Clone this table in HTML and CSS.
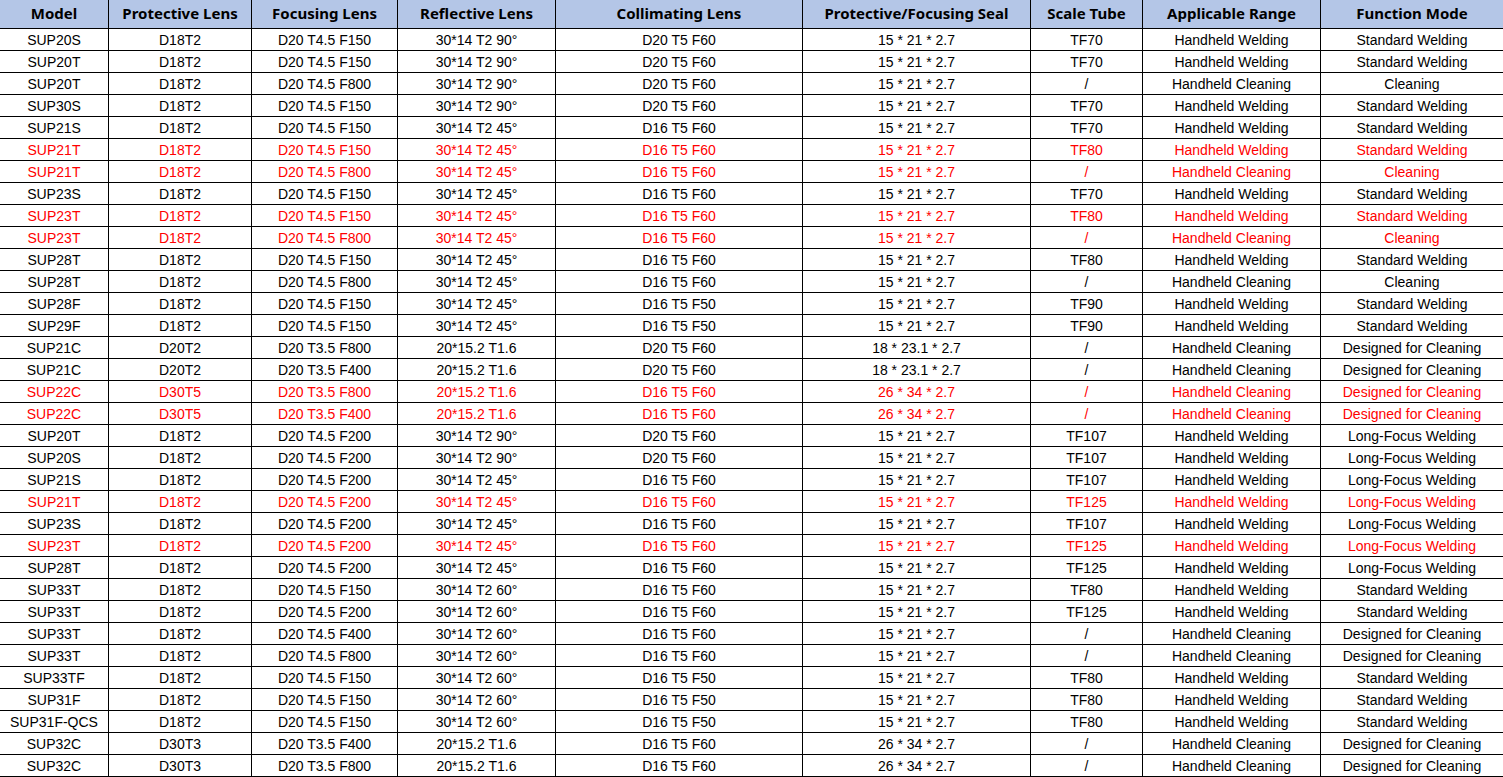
FILE: index.html
```html
<!DOCTYPE html>
<html lang="en">
<head>
<meta charset="utf-8">
<title>Lens Compatibility Table</title>
<link rel="stylesheet" href="styles.css">
</head>
<body>
<div class="wrap">
<table class="spec">
<colgroup>
<col class="c1"><col class="c2"><col class="c3"><col class="c4"><col class="c5"><col class="c6"><col class="c7"><col class="c8"><col class="c9">
</colgroup>
<thead>
<tr><th>Model</th><th>Protective Lens</th><th>Focusing Lens</th><th>Reflective Lens</th><th>Collimating Lens</th><th>Protective/Focusing Seal</th><th>Scale Tube</th><th>Applicable Range</th><th>Function Mode</th></tr>
</thead>
<tbody>
<tr><td>SUP20S</td><td>D18T2</td><td>D20 T4.5 F150</td><td>30*14 T2 90°</td><td>D20 T5 F60</td><td>15 * 21 * 2.7</td><td>TF70</td><td>Handheld Welding</td><td>Standard Welding</td></tr>
<tr><td>SUP20T</td><td>D18T2</td><td>D20 T4.5 F150</td><td>30*14 T2 90°</td><td>D20 T5 F60</td><td>15 * 21 * 2.7</td><td>TF70</td><td>Handheld Welding</td><td>Standard Welding</td></tr>
<tr><td>SUP20T</td><td>D18T2</td><td>D20 T4.5 F800</td><td>30*14 T2 90°</td><td>D20 T5 F60</td><td>15 * 21 * 2.7</td><td>/</td><td>Handheld Cleaning</td><td>Cleaning</td></tr>
<tr><td>SUP30S</td><td>D18T2</td><td>D20 T4.5 F150</td><td>30*14 T2 90°</td><td>D20 T5 F60</td><td>15 * 21 * 2.7</td><td>TF70</td><td>Handheld Welding</td><td>Standard Welding</td></tr>
<tr><td>SUP21S</td><td>D18T2</td><td>D20 T4.5 F150</td><td>30*14 T2 45°</td><td>D16 T5 F60</td><td>15 * 21 * 2.7</td><td>TF70</td><td>Handheld Welding</td><td>Standard Welding</td></tr>
<tr class="hl"><td>SUP21T</td><td>D18T2</td><td>D20 T4.5 F150</td><td>30*14 T2 45°</td><td>D16 T5 F60</td><td>15 * 21 * 2.7</td><td>TF80</td><td>Handheld Welding</td><td>Standard Welding</td></tr>
<tr class="hl"><td>SUP21T</td><td>D18T2</td><td>D20 T4.5 F800</td><td>30*14 T2 45°</td><td>D16 T5 F60</td><td>15 * 21 * 2.7</td><td>/</td><td>Handheld Cleaning</td><td>Cleaning</td></tr>
<tr><td>SUP23S</td><td>D18T2</td><td>D20 T4.5 F150</td><td>30*14 T2 45°</td><td>D16 T5 F60</td><td>15 * 21 * 2.7</td><td>TF70</td><td>Handheld Welding</td><td>Standard Welding</td></tr>
<tr class="hl"><td>SUP23T</td><td>D18T2</td><td>D20 T4.5 F150</td><td>30*14 T2 45°</td><td>D16 T5 F60</td><td>15 * 21 * 2.7</td><td>TF80</td><td>Handheld Welding</td><td>Standard Welding</td></tr>
<tr class="hl"><td>SUP23T</td><td>D18T2</td><td>D20 T4.5 F800</td><td>30*14 T2 45°</td><td>D16 T5 F60</td><td>15 * 21 * 2.7</td><td>/</td><td>Handheld Cleaning</td><td>Cleaning</td></tr>
<tr><td>SUP28T</td><td>D18T2</td><td>D20 T4.5 F150</td><td>30*14 T2 45°</td><td>D16 T5 F60</td><td>15 * 21 * 2.7</td><td>TF80</td><td>Handheld Welding</td><td>Standard Welding</td></tr>
<tr><td>SUP28T</td><td>D18T2</td><td>D20 T4.5 F800</td><td>30*14 T2 45°</td><td>D16 T5 F60</td><td>15 * 21 * 2.7</td><td>/</td><td>Handheld Cleaning</td><td>Cleaning</td></tr>
<tr><td>SUP28F</td><td>D18T2</td><td>D20 T4.5 F150</td><td>30*14 T2 45°</td><td>D16 T5 F50</td><td>15 * 21 * 2.7</td><td>TF90</td><td>Handheld Welding</td><td>Standard Welding</td></tr>
<tr><td>SUP29F</td><td>D18T2</td><td>D20 T4.5 F150</td><td>30*14 T2 45°</td><td>D16 T5 F50</td><td>15 * 21 * 2.7</td><td>TF90</td><td>Handheld Welding</td><td>Standard Welding</td></tr>
<tr><td>SUP21C</td><td>D20T2</td><td>D20 T3.5 F800</td><td>20*15.2 T1.6</td><td>D20 T5 F60</td><td>18 * 23.1 * 2.7</td><td>/</td><td>Handheld Cleaning</td><td>Designed for Cleaning</td></tr>
<tr><td>SUP21C</td><td>D20T2</td><td>D20 T3.5 F400</td><td>20*15.2 T1.6</td><td>D20 T5 F60</td><td>18 * 23.1 * 2.7</td><td>/</td><td>Handheld Cleaning</td><td>Designed for Cleaning</td></tr>
<tr class="hl"><td>SUP22C</td><td>D30T5</td><td>D20 T3.5 F800</td><td>20*15.2 T1.6</td><td>D16 T5 F60</td><td>26 * 34 * 2.7</td><td>/</td><td>Handheld Cleaning</td><td>Designed for Cleaning</td></tr>
<tr class="hl"><td>SUP22C</td><td>D30T5</td><td>D20 T3.5 F400</td><td>20*15.2 T1.6</td><td>D16 T5 F60</td><td>26 * 34 * 2.7</td><td>/</td><td>Handheld Cleaning</td><td>Designed for Cleaning</td></tr>
<tr><td>SUP20T</td><td>D18T2</td><td>D20 T4.5 F200</td><td>30*14 T2 90°</td><td>D20 T5 F60</td><td>15 * 21 * 2.7</td><td>TF107</td><td>Handheld Welding</td><td>Long-Focus Welding</td></tr>
<tr><td>SUP20S</td><td>D18T2</td><td>D20 T4.5 F200</td><td>30*14 T2 90°</td><td>D20 T5 F60</td><td>15 * 21 * 2.7</td><td>TF107</td><td>Handheld Welding</td><td>Long-Focus Welding</td></tr>
<tr><td>SUP21S</td><td>D18T2</td><td>D20 T4.5 F200</td><td>30*14 T2 45°</td><td>D16 T5 F60</td><td>15 * 21 * 2.7</td><td>TF107</td><td>Handheld Welding</td><td>Long-Focus Welding</td></tr>
<tr class="hl"><td>SUP21T</td><td>D18T2</td><td>D20 T4.5 F200</td><td>30*14 T2 45°</td><td>D16 T5 F60</td><td>15 * 21 * 2.7</td><td>TF125</td><td>Handheld Welding</td><td>Long-Focus Welding</td></tr>
<tr><td>SUP23S</td><td>D18T2</td><td>D20 T4.5 F200</td><td>30*14 T2 45°</td><td>D16 T5 F60</td><td>15 * 21 * 2.7</td><td>TF107</td><td>Handheld Welding</td><td>Long-Focus Welding</td></tr>
<tr class="hl"><td>SUP23T</td><td>D18T2</td><td>D20 T4.5 F200</td><td>30*14 T2 45°</td><td>D16 T5 F60</td><td>15 * 21 * 2.7</td><td>TF125</td><td>Handheld Welding</td><td>Long-Focus Welding</td></tr>
<tr><td>SUP28T</td><td>D18T2</td><td>D20 T4.5 F200</td><td>30*14 T2 45°</td><td>D16 T5 F60</td><td>15 * 21 * 2.7</td><td>TF125</td><td>Handheld Welding</td><td>Long-Focus Welding</td></tr>
<tr><td>SUP33T</td><td>D18T2</td><td>D20 T4.5 F150</td><td>30*14 T2 60°</td><td>D16 T5 F60</td><td>15 * 21 * 2.7</td><td>TF80</td><td>Handheld Welding</td><td>Standard Welding</td></tr>
<tr><td>SUP33T</td><td>D18T2</td><td>D20 T4.5 F200</td><td>30*14 T2 60°</td><td>D16 T5 F60</td><td>15 * 21 * 2.7</td><td>TF125</td><td>Handheld Welding</td><td>Standard Welding</td></tr>
<tr><td>SUP33T</td><td>D18T2</td><td>D20 T4.5 F400</td><td>30*14 T2 60°</td><td>D16 T5 F60</td><td>15 * 21 * 2.7</td><td>/</td><td>Handheld Cleaning</td><td>Designed for Cleaning</td></tr>
<tr><td>SUP33T</td><td>D18T2</td><td>D20 T4.5 F800</td><td>30*14 T2 60°</td><td>D16 T5 F60</td><td>15 * 21 * 2.7</td><td>/</td><td>Handheld Cleaning</td><td>Designed for Cleaning</td></tr>
<tr><td>SUP33TF</td><td>D18T2</td><td>D20 T4.5 F150</td><td>30*14 T2 60°</td><td>D16 T5 F50</td><td>15 * 21 * 2.7</td><td>TF80</td><td>Handheld Welding</td><td>Standard Welding</td></tr>
<tr><td>SUP31F</td><td>D18T2</td><td>D20 T4.5 F150</td><td>30*14 T2 60°</td><td>D16 T5 F50</td><td>15 * 21 * 2.7</td><td>TF80</td><td>Handheld Welding</td><td>Standard Welding</td></tr>
<tr><td>SUP31F-QCS</td><td>D18T2</td><td>D20 T4.5 F150</td><td>30*14 T2 60°</td><td>D16 T5 F50</td><td>15 * 21 * 2.7</td><td>TF80</td><td>Handheld Welding</td><td>Standard Welding</td></tr>
<tr><td>SUP32C</td><td>D30T3</td><td>D20 T3.5 F400</td><td>20*15.2 T1.6</td><td>D16 T5 F60</td><td>26 * 34 * 2.7</td><td>/</td><td>Handheld Cleaning</td><td>Designed for Cleaning</td></tr>
<tr><td>SUP32C</td><td>D30T3</td><td>D20 T3.5 F800</td><td>20*15.2 T1.6</td><td>D16 T5 F60</td><td>26 * 34 * 2.7</td><td>/</td><td>Handheld Cleaning</td><td>Designed for Cleaning</td></tr>
</tbody>
</table>
</div>
</body>
</html>
```

FILE: styles.css
```css
html, body {
  margin: 0;
  padding: 0;
  background: #ffffff;
  overflow: hidden;
}

.wrap {
  margin: -1px 0 0 -1px;
}

.spec {
  border-collapse: collapse;
  table-layout: fixed;
  width: 1504px;
  font-family: "Liberation Sans", Arial, sans-serif;
  font-size: 14px;
  color: #000000;
}

.c1 { width: 109px; }
.c2 { width: 143px; }
.c3 { width: 146px; }
.c4 { width: 158px; }
.c5 { width: 247px; }
.c6 { width: 228px; }
.c7 { width: 112px; }
.c8 { width: 178px; }
.c9 { width: 183px; }

.spec th,
.spec td {
  border: 1px solid #000000;
  padding: 0;
  text-align: center;
  white-space: nowrap;
  overflow: hidden;
}

.spec th {
  background: #b4c6e7;
  height: 28px;
  box-sizing: border-box;
  padding-bottom: 2px;
  font-family: "Noto Sans", "Open Sans", sans-serif;
  font-weight: 700;
  font-size: 15px;
  line-height: 26px;
}

.spec td {
  height: 21px;
  padding-top: 1px;
  line-height: 20px;
  box-sizing: border-box;
}

.spec tr.hl td {
  color: #ff0000;
}
```
